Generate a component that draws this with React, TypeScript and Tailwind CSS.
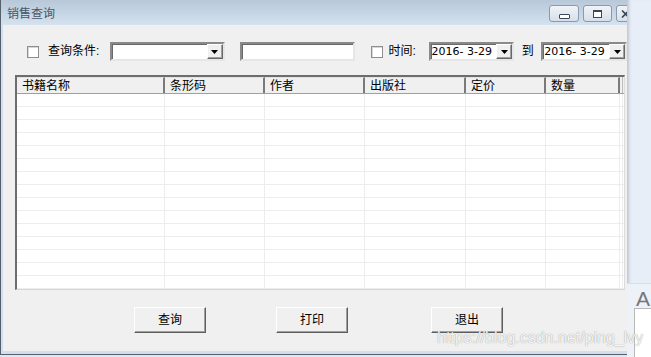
import React from "react";

const cjk = "font-['Liberation_Sans','Noto_Sans_CJK_SC',sans-serif]";

const columns = [
  { name: "书籍名称", w: "w-[148px]" },
  { name: "条形码", w: "w-[100px]" },
  { name: "作者", w: "w-[100px]" },
  { name: "出版社", w: "w-[101px]" },
  { name: "定价", w: "w-[80px]" },
  { name: "数量", w: "w-[74px]" },
];

const rows = Array.from({ length: 15 }, (_, i) => i);

function Arrow() {
  return (
    <svg width="7" height="4" viewBox="0 0 7 4">
      <path d="M0 0h7L3.5 4z" fill="#000" />
    </svg>
  );
}

function DropButton() {
  return (
    <div className="w-[16px] h-full flex items-center justify-center bg-[#f0f0f0] border-t border-l border-white border-r border-b border-r-[#696969] border-b-[#696969] shadow-[inset_-1px_-1px_0_#a0a0a0]">
      <Arrow />
    </div>
  );
}

function Sunken({ w, children }: { w: string; children?: React.ReactNode }) {
  return (
    <div
      className={`${w} h-[19px] flex bg-white border-2 border-t-[#8a8a8a] border-l-[#8a8a8a] border-r-[#e6e6e6] border-b-[#e6e6e6] shadow-[inset_1px_1px_0_#696969]`}
    >
      {children}
    </div>
  );
}

function Check() {
  return <div className="w-[12px] h-[12px] bg-white border border-[#8e8e8e] shadow-[inset_1px_1px_0_#d8d8d8]" />;
}

function DateBox({ w }: { w: string }) {
  return (
    <Sunken w={w}>
      <div className="flex-1 pl-[1px] text-[11px] leading-[15px] text-black font-['DejaVu_Sans',sans-serif] whitespace-pre">
        2016- 3-29
      </div>
      <DropButton />
    </Sunken>
  );
}

function Btn({ label }: { label: string }) {
  return (
    <div className="w-[72px] h-[26px] flex items-center justify-center bg-[#f0f0f0] border-t border-l border-white border-r border-b border-r-[#5e5e5e] border-b-[#5e5e5e] shadow-[inset_-1px_-1px_0_#a0a0a0] text-[12px] text-black">
      {label}
    </div>
  );
}

function TitleButton({ w, children }: { w: string; children?: React.ReactNode }) {
  return (
    <div
      className={`${w} h-[17px] shrink-0 flex items-center justify-center rounded-[3px] border border-[#8b9aab] bg-gradient-to-b from-[#f1f4f8] to-[#d6dfe9]`}
    >
      {children}
    </div>
  );
}

export default function App() {
  return (
    <div className={`relative w-[651px] h-[357px] flex overflow-hidden bg-[#dfe7f2] ${cjk}`}>
      {/* window */}
      <div className="w-[627px] h-[355px] shrink-0 flex flex-col border-l border-b border-[#55606d] bg-[#f0f0f0]">
        <div className="h-[25px] flex items-start overflow-hidden bg-gradient-to-b from-[#b7c8d9] to-[#d5e2ef]">
          <div className="w-[548px] shrink-0 pl-[6px] pt-[7px] text-[12px] leading-[14px] text-[#475566]">销售查询</div>
          <div className="flex gap-[4px] pt-[5px]">
            <TitleButton w="w-[30px]">
              <div className="mt-[6px] w-[11px] h-[5px] rounded-[1px] border border-[#3b4757] bg-white" />
            </TitleButton>
            <TitleButton w="w-[29px]">
              <div className="w-[9px] h-[8px] border border-t-2 border-[#3b4757] bg-white" />
            </TitleButton>
            <TitleButton w="w-[45px]">
              <svg className="mr-[26px]" width="9" height="8" viewBox="0 0 9 8">
                <path d="M1 0.5L8 7.5M8 0.5L1 7.5" stroke="#3b4757" strokeWidth="1.6" fill="none" />
              </svg>
            </TitleButton>
          </div>
        </div>

        <div className="flex-1 flex flex-col border-l-2 border-b-[3px] border-[#d3dfec]">
          {/* filter row */}
          <div className="mt-[17px] h-[19px] flex items-center text-[12px] text-black">
            <div className="ml-[24px]">
              <Check />
            </div>
            <span className="ml-[9px] w-[62px] shrink-0 leading-[19px]">查询条件:</span>
            <Sunken w="w-[115px]">
              <div className="flex-1" />
              <DropButton />
            </Sunken>
            <div className="ml-[15px]">
              <Sunken w="w-[115px]" />
            </div>
            <div className="ml-[16px]">
              <Check />
            </div>
            <span className="ml-[6px] w-[40px] shrink-0 leading-[19px]">时间:</span>
            <DateBox w="w-[86px]" />
            <span className="w-[27px] shrink-0 text-center leading-[19px]">到</span>
            <DateBox w="w-[86px]" />
          </div>

          {/* table */}
          <div className="ml-[12px] mt-[14px] w-[610px] flex flex-col border-t-2 border-l-2 border-[#6d6d6d] border-r border-b border-r-[#dcdcdc] border-b-[#d6d6d6] bg-white">
            <div className="h-[17px] flex bg-[#f0f0f0] border-b border-[#a0a0a0]">
              {columns.map((c) => (
                <div
                  key={c.name}
                  className={`${c.w} shrink-0 pl-[5px] text-[12px] leading-[16px] text-black border-r-2 border-[#7a7a7a] border-t border-t-[#e2e2e2]`}
                >
                  {c.name}
                </div>
              ))}
              <div className="w-[3px] border-r border-[#bdbdbd]" />
            </div>
            {rows.map((r) => (
              <div key={r} className="h-[13px] flex border-b border-[#ededed]">
                {columns.map((c) => (
                  <div key={c.name} className={`${c.w} shrink-0 border-r border-[#ededed]`} />
                ))}
                <div className="w-[3px] border-r border-[#ededed]" />
              </div>
            ))}
          </div>

          {/* buttons */}
          <div className="mt-[17px] flex">
            <div className="ml-[131px]">
              <Btn label="查询" />
            </div>
            <div className="ml-[70px]">
              <Btn label="打印" />
            </div>
            <div className="ml-[83px]">
              <Btn label="退出" />
            </div>
          </div>
        </div>
      </div>

      {/* neighbouring window strip */}
      <div className="flex-1 flex flex-col bg-[#e8eef8] shadow-[inset_4px_0_3px_-2px_#bfc7d1]">
        <div className="h-[283px]" />
        <div className="flex-1 flex flex-col border-t border-[#d8dfe9] bg-[#edf1f8]">
          <div className="pl-[9px] pt-[6px] h-[24px] text-[21px] leading-[18px] text-[#777] font-['Liberation_Sans',sans-serif]">
            A
          </div>
          <div className="ml-[7px] flex-1 bg-white border-l border-t border-[#b9b9b9]" />
        </div>
      </div>

      {/* watermark */}
      <div className="absolute left-[437px] top-[330px] text-[16px] leading-[16px] font-['Liberation_Sans',sans-serif] text-white/90 [text-shadow:0_0_1px_#7f7f7f] whitespace-nowrap">
        https://blog.csdn.net/ping_lvy
      </div>
    </div>
  );
}
